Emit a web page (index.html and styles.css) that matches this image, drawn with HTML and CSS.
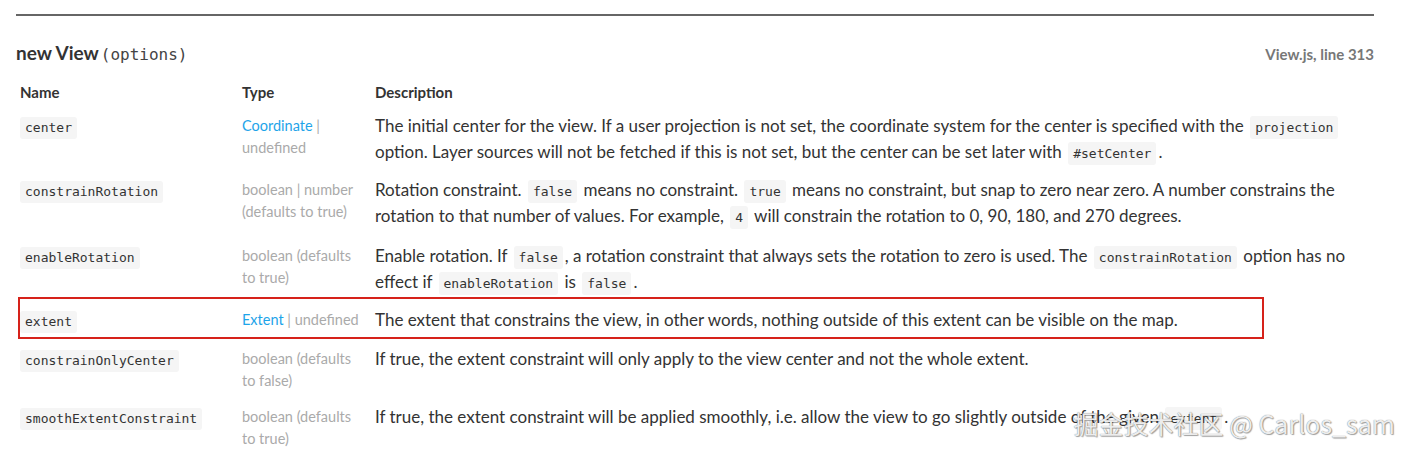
FILE: index.html
```html
<!DOCTYPE html>
<html lang="en">
<head>
<meta charset="utf-8">
<title>View</title>
<link rel="stylesheet" href="styles.css">
</head>
<body>
<div class="page">
  <hr class="rule">
  <div class="head">
    <h4 class="sig"><span class="new">new View</span><span class="args">(options)</span></h4>
    <span class="src">View.js, line 313</span>
  </div>
  <table class="params">
    <colgroup><col class="c-name"><col class="c-type"><col class="c-desc"></colgroup>
    <thead>
      <tr><th>Name</th><th>Type</th><th>Description</th></tr>
    </thead>
    <tbody>
      <tr>
        <td class="name"><code>center</code></td>
        <td class="type"><a class="link">Coordinate</a> | undefined</td>
        <td class="desc">The initial center for the view. If a user projection is not set, the coordinate system for the center is specified with the <code>projection</code> option. Layer sources will not be fetched if this is not set, but the center can be set later with <code>#setCenter</code>.</td>
      </tr>
      <tr class="roomy">
        <td class="name"><code>constrainRotation</code></td>
        <td class="type">boolean | number (defaults to true)</td>
        <td class="desc">Rotation constraint. <code>false</code> means no constraint. <code>true</code> means no constraint, but snap to zero near zero. A number constrains the rotation to that number of values. For example, <code>4</code> will constrain the rotation to 0, 90, 180, and 270 degrees.</td>
      </tr>
      <tr>
        <td class="name"><code>enableRotation</code></td>
        <td class="type">boolean (defaults to true)</td>
        <td class="desc">Enable rotation. If <code>false</code>, a rotation constraint that always sets the rotation to zero is used. The <code>constrainRotation</code> option has no effect if <code>enableRotation</code> is <code>false</code>.</td>
      </tr>
      <tr class="single">
        <td class="name marked"><span class="highlight"></span><code>extent</code></td>
        <td class="type"><a class="link">Extent</a> | undefined</td>
        <td class="desc">The extent that constrains the view, in other words, nothing outside of this extent can be visible on the map.</td>
      </tr>
      <tr>
        <td class="name"><code>constrainOnlyCenter</code></td>
        <td class="type">boolean (defaults to false)</td>
        <td class="desc">If true, the extent constraint will only apply to the view center and not the whole extent.</td>
      </tr>
      <tr>
        <td class="name"><code>smoothExtentConstraint</code></td>
        <td class="type">boolean (defaults to true)</td>
        <td class="desc">If true, the extent constraint will be applied smoothly, i.e. allow the view to go slightly outside of the given <code>extent</code>.</td>
      </tr>
    </tbody>
  </table>
  <div class="watermark">掘金技术社区 @ Carlos_sam</div>
</div>
</body>
</html>
```

FILE: styles.css
```css
html, body {
  margin: 0;
  background: #fff;
  height: 454px;
  overflow: hidden;
}

body {
  font-family: Lato, "Open Sans", sans-serif;
  color: #333;
}

.page {
  position: relative;
  padding: 14px 37px 0 16px;
}

.rule {
  border: 0;
  border-top: 2px solid #666;
  margin: 0;
}

.head {
  display: flex;
  justify-content: space-between;
  align-items: baseline;
  margin-top: 25px;
}

.sig {
  margin: 0;
  font-size: 19px;
  line-height: 24px;
  font-weight: 700;
  color: #333;
}

.sig .args {
  font-family: "DejaVu Sans Mono", "Liberation Mono", monospace;
  font-weight: 400;
  font-size: 16px;
  color: #444;
  margin-left: 2px;
}

.src {
  font-size: 15px;
  font-weight: 700;
  color: #777;
}

.params {
  width: 100%;
  border-collapse: collapse;
  margin-top: 10px;
}

.c-name { width: 222px; }
.c-type { width: 133px; }

.params th {
  text-align: left;
  font-size: 15px;
  line-height: 22px;
  font-weight: 700;
  color: #333;
  padding: 4px 4px;
}

.params td {
  vertical-align: top;
  padding: 6px 4px;
}

.params .roomy td {
  padding-bottom: 8px;
}

.params .single td {
  padding-bottom: 7px;
}

.params code {
  font-family: "DejaVu Sans Mono", "Liberation Mono", monospace;
  font-size: 13px;
  line-height: 1;
  background: #f5f5f5;
  border-radius: 3px;
  color: #333;
  padding: 4px 5px;
  margin: 0 2px;
}

.name {
  line-height: 26px;
}

.name code {
  display: inline-block;
  line-height: 16px;
  padding: 3px 5px;
  margin: 0;
}

.params td.type {
  font-size: 14.5px;
  line-height: 22px;
  color: #aaa;
  padding-top: 8px;
  padding-bottom: 6px;
}

.link {
  color: #1ea4e9;
}

.desc {
  font-size: 17px;
  line-height: 26px;
  color: #333;
}

.marked {
  position: relative;
}

.highlight {
  position: absolute;
  left: 2px;
  top: -4px;
  width: 1242px;
  height: 38px;
  border: 2px solid #d6221a;
  pointer-events: none;
}

.watermark {
  position: absolute;
  right: 16px;
  top: 405px;
  font-family: "Noto Sans CJK SC", "Noto Sans", sans-serif;
  font-size: 25px;
  line-height: 36px;
  color: rgba(250, 250, 250, 0.92);
  text-shadow: 0 0 1px #666, 1px 1px 1px rgba(0, 0, 0, 0.35);
  white-space: nowrap;
}
```
